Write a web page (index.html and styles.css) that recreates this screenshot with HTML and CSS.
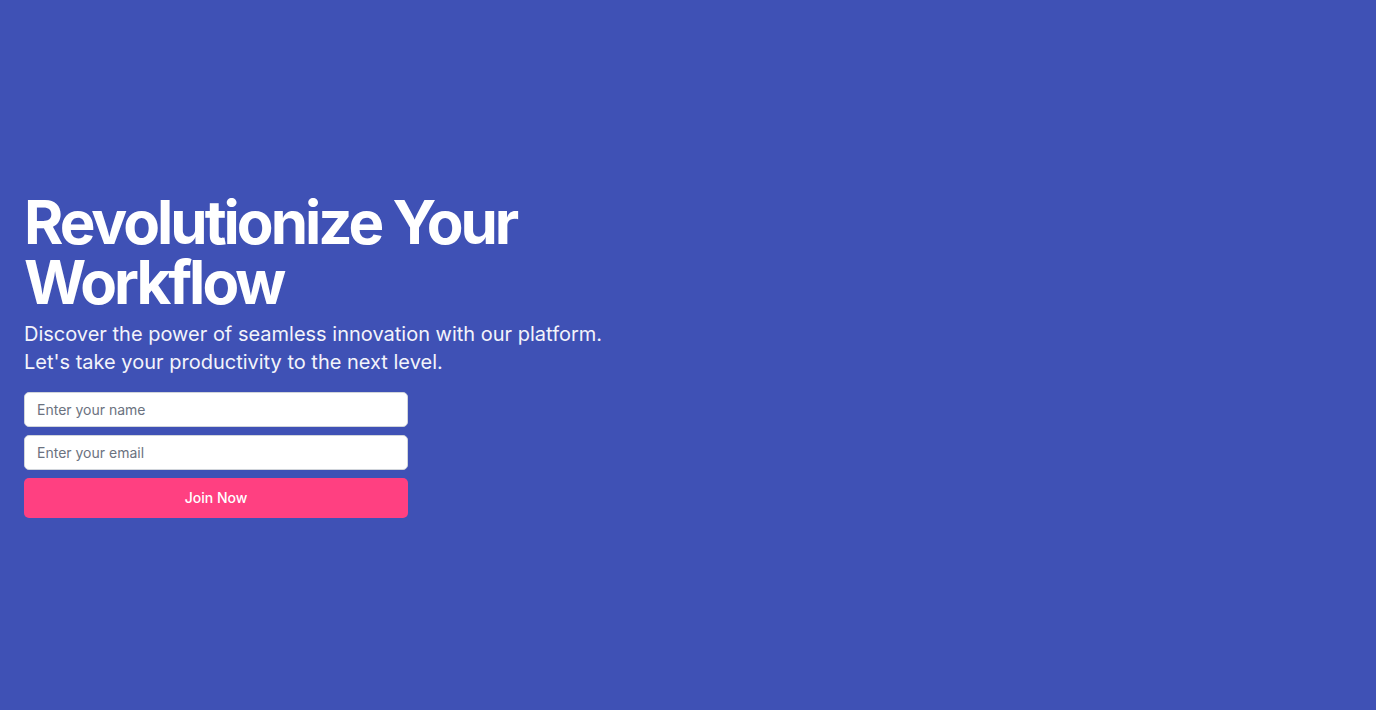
FILE: index.html
```html
<!DOCTYPE html>
<html lang="en">
<head>
<meta charset="utf-8">
<title>Revolutionize Your Workflow</title>
<link rel="stylesheet" href="styles.css">
</head>
<body>
<main class="hero">
  <div class="hero-content">
    <h1 class="hero-title">Revolutionize Your<br>Workflow</h1>
    <p class="hero-text">Discover the power of seamless innovation with our platform.<br>Let's take your productivity to the next level.</p>
    <form class="signup">
      <input class="field" type="text" placeholder="Enter your name">
      <input class="field" type="email" placeholder="Enter your email">
      <button class="join" type="button">Join Now</button>
    </form>
  </div>
</main>
</body>
</html>
```

FILE: styles.css
```css
* { box-sizing: border-box; }
html, body { margin: 0; padding: 0; height: 100%; }
body {
  background: #3f51b5;
  font-family: Inter, "Noto Sans", sans-serif;
  color: #fff;
}
.hero {
  min-height: 100vh;
  display: flex;
  align-items: center;
  padding: 0 24px;
}
.hero-content { display: flex; flex-direction: column; }
.hero-title {
  margin: 0;
  font-size: 60px;
  line-height: 60px;
  font-weight: 700;
  letter-spacing: -0.05em;
}
.hero-text {
  margin: 8px 0 0;
  font-size: 20px;
  line-height: 28px;
  font-weight: 400;
  color: #f3f4fb;
}
.signup {
  margin-top: 16px;
  width: 384px;
  display: flex;
  flex-direction: column;
  gap: 8px;
}
.field {
  height: 35px;
  padding: 0 12px;
  border: 1px solid #d1d5db;
  border-radius: 5px;
  background: #fff;
  font-family: inherit;
  font-size: 14px;
  color: #111;
  outline: none;
}
.field::placeholder { color: #6b7280; }
.join {
  height: 40px;
  padding: 0 0 2px;
  border: none;
  border-radius: 5px;
  background: #ff4081;
  color: #fff;
  font-family: inherit;
  font-size: 14px;
  font-weight: 500;
  cursor: pointer;
}
```
